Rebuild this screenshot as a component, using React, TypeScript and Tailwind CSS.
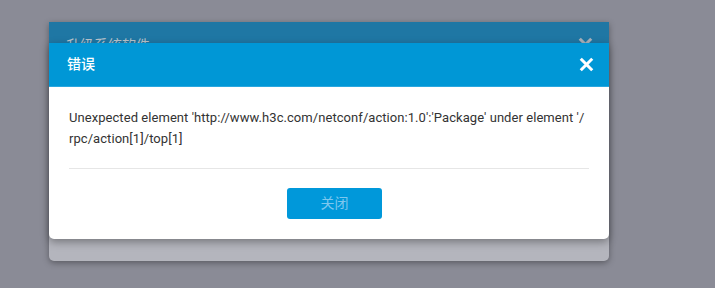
import React from "react";

const font = { fontFamily: '"Roboto", "Noto Sans CJK SC", sans-serif' };

// X glyph used for dialog close buttons
const CloseIcon = ({ className }: { className?: string }) => (
  <svg viewBox="0 0 16 16" className={className} fill="none">
    <path d="M3 3L13 13M13 3L3 13" stroke="currentColor" strokeWidth="3.2" strokeLinecap="square" />
  </svg>
);

export default function App() {
  return (
    <div className="w-[715px] h-[288px] bg-[#8a8b96] overflow-hidden" style={font}>
      {/* upgrade dialog behind */}
      <div className="relative ml-[49px] mt-[22px] w-[560px] h-[239px] rounded-b-[5px] bg-[#b4b5bd] shadow-[0_2px_6px_rgba(0,0,0,0.35)]">
        <div className="flex h-[40px] items-start justify-between bg-[#1f77a4] pl-[17px] pr-[16px] pt-[13px]">
          <span className="text-[14px] text-[#b9c3cc]">升级系统软件</span>
          <CloseIcon className="mt-[2px] h-[15px] w-[15px] text-[#a9b0b9]" />
        </div>

        {/* error dialog on top */}
        <div className="absolute left-0 top-[21px] w-[560px] rounded-b-[5px] bg-white shadow-[0_3px_8px_rgba(0,0,0,0.35)]">
          <div className="flex h-[44px] items-center justify-between border-b border-[#2aa7df] bg-[#0097d6] pl-[18px] pr-[15px]">
            <span className="text-[14px] font-medium text-white">错误</span>
            <CloseIcon className="h-[15px] w-[15px] text-white" />
          </div>
          <div className="px-[20px] pt-[20px]">
            <p className="pb-[19px] text-[13px] leading-[21px] tracking-[0.06px] text-[#333333]">
              Unexpected element 'http://www.h3c.com/netconf/action:1.0':'Package' under element '/
              <br />
              rpc/action[1]/top[1]
            </p>
            <div className="border-t border-[#e6e6e6]" />
            <div className="flex justify-center pb-[20px] pl-[11px] pt-[19px]">
              <button className="h-[31px] w-[95px] rounded-[3px] bg-[#0098da] text-[14px] text-[#7ec7ee]">
                关闭
              </button>
            </div>
          </div>
        </div>
      </div>
    </div>
  );
}
